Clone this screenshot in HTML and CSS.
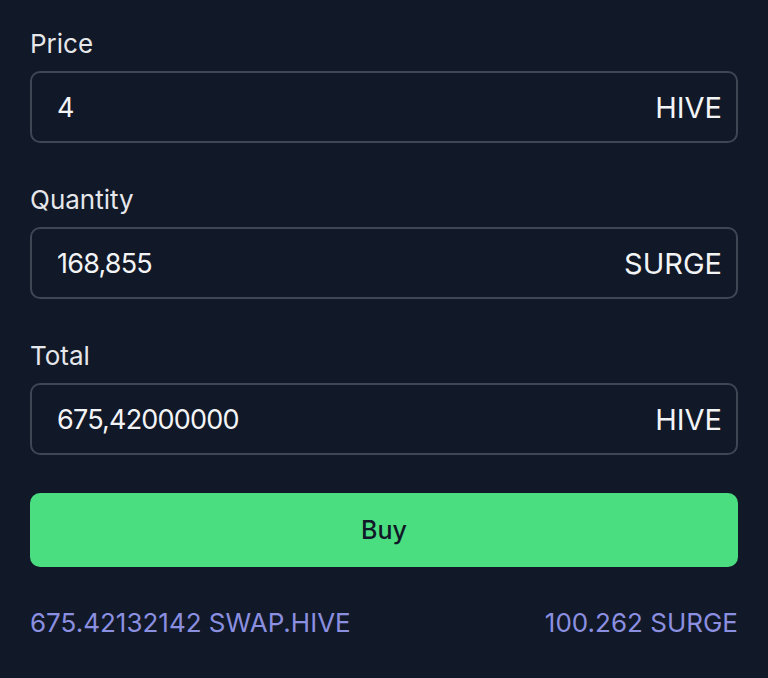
FILE: index.html
```html
<!DOCTYPE html>
<html lang="en">
<head>
    <meta charset="UTF-8">
    <meta name="viewport" content="width=device-width, initial-scale=1.0">
    <title>Buy order</title>
    <link rel="stylesheet" href="styles.css">
</head>
<body>
    <div class="order-form">
        <!-- Price -->
        <div class="field">
            <label class="field-label">Price</label>
            <div class="field-input">
                <span class="field-value">4</span>
                <span class="field-unit">HIVE</span>
            </div>
        </div>

        <!-- Quantity -->
        <div class="field">
            <label class="field-label">Quantity</label>
            <div class="field-input">
                <span class="field-value">168,855</span>
                <span class="field-unit">SURGE</span>
            </div>
        </div>

        <!-- Total -->
        <div class="field">
            <label class="field-label">Total</label>
            <div class="field-input">
                <span class="field-value">675,42000000</span>
                <span class="field-unit">HIVE</span>
            </div>
        </div>

        <button class="buy-button">Buy</button>

        <div class="balances">
            <span>675.42132142 SWAP.HIVE</span>
            <span>100.262 SURGE</span>
        </div>
    </div>
</body>
</html>
```

FILE: styles.css
```css
* {
    margin: 0;
    padding: 0;
    box-sizing: border-box;
}

body {
    font-family: Inter, "Noto Sans", sans-serif;
    background-color: #111827;
    color: #e5e7eb;
}

.order-form {
    padding: 29px 30px 0 30px;
    display: flex;
    flex-direction: column;
}

.field {
    display: flex;
    flex-direction: column;
    margin-bottom: 42px;
}

.field:nth-child(3) {
    margin-bottom: 38px;
}

.field-label {
    font-size: 26px;
    line-height: 30px;
    margin-bottom: 12px;
    color: #e5e7eb;
}

.field-input {
    height: 72px;
    border: 2px solid #3f4654;
    border-radius: 10px;
    display: flex;
    align-items: center;
    justify-content: space-between;
    padding: 0 14px 0 25px;
    color: #f3f4f6;
}

.field-value {
    font-size: 27px;
    letter-spacing: -0.8px;
}

.field-unit {
    font-size: 29px;
}

.buy-button {
    height: 74px;
    border: none;
    border-radius: 10px;
    background-color: #4ade80;
    color: #111827;
    font-family: inherit;
    font-size: 25px;
    font-weight: 500;
}

.balances {
    margin-top: 41px;
    display: flex;
    justify-content: space-between;
    font-size: 26px;
    line-height: 30px;
    color: #8b8fe0;
}
```
